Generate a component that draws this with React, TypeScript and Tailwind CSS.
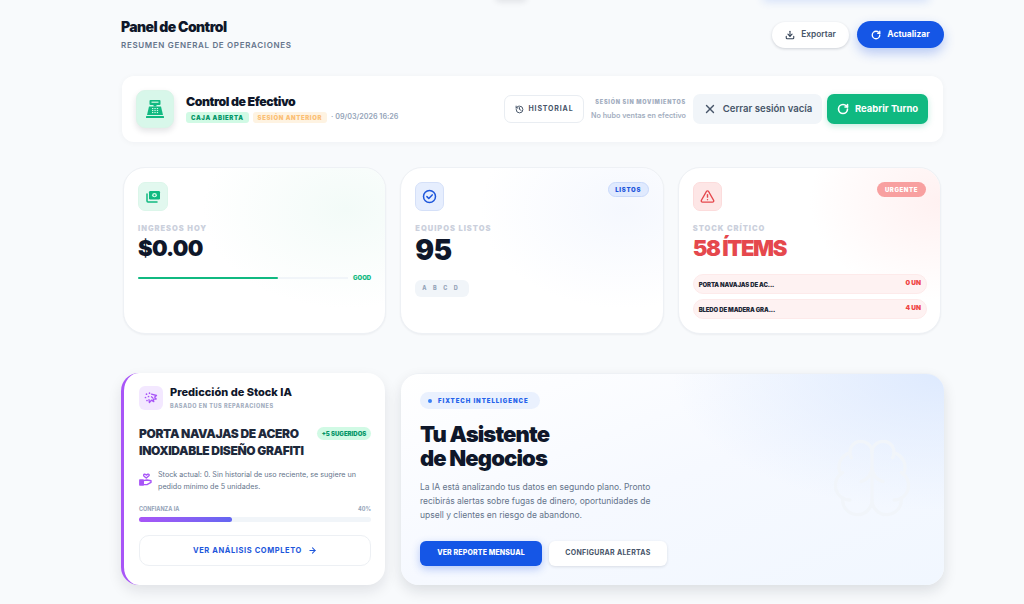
import React from "react";
import { Download, RotateCw, History, X, TriangleAlert, ArrowRight, Brain } from "lucide-react";

const font = { fontFamily: "Inter, 'Liberation Sans', sans-serif" };

function CashRegister() {
  return (
    <svg width="20" height="20" viewBox="0 0 20 20" fill="#10b981">
      <rect x="4.5" y="1" width="11" height="5" rx="1" />
      <rect x="6.5" y="2.6" width="7" height="1.2" fill="#d1fae5" />
      <rect x="8.5" y="6" width="3" height="1.5" />
      <path d="M4 7.5h12l2 8.5H2z" />
      <rect x="1" y="17" width="18" height="2" rx="0.6" />
      <g fill="#d1fae5">
        <rect x="7" y="9" width="1.3" height="1.1" /><rect x="9.4" y="9" width="1.3" height="1.1" /><rect x="11.8" y="9" width="1.3" height="1.1" />
        <rect x="7" y="11" width="1.3" height="1.1" /><rect x="9.4" y="11" width="1.3" height="1.1" /><rect x="11.8" y="11" width="1.3" height="1.1" />
        <rect x="7" y="13" width="1.3" height="1.1" /><rect x="9.4" y="13" width="1.3" height="1.1" /><rect x="11.8" y="13" width="1.3" height="1.1" />
      </g>
    </svg>
  );
}

function Money() {
  return (
    <svg width="15" height="13" viewBox="0 0 15 13" fill="none">
      <path d="M1 4v7a1 1 0 0 0 1 1h9" stroke="#10b981" strokeWidth="1.5" strokeLinecap="round" />
      <rect x="3" y="1" width="11" height="8.4" rx="1.2" fill="#10b981" />
      <ellipse cx="8.5" cy="5.2" rx="2.4" ry="2.1" fill="#d1fae5" />
      <circle cx="8.5" cy="5.2" r="1" fill="#10b981" />
    </svg>
  );
}

function CheckBadge() {
  return (
    <svg width="15" height="15" viewBox="0 0 15 15" fill="none" stroke="#1d56db" strokeWidth="1.5" strokeLinecap="round" strokeLinejoin="round">
      <circle cx="7.5" cy="7.5" r="6" />
      <path d="M4.9 7.6l1.9 1.9 3.4-3.6" />
    </svg>
  );
}

function Scatter() {
  return (
    <svg width="14" height="14" viewBox="0 0 14 14" fill="none" stroke="#a855f7" strokeWidth="1.3" strokeLinecap="round" strokeLinejoin="round">
      <path d="M2.5 3.2h.01M5.5 2.2h.01M1.5 6.5h.01M4.5 5.5h.01M3 9.5h.01" strokeWidth="1.7" />
      <path d="M7.5 3.2l5 1.3-1.8 1.6 1.5 1.9-3 .2.6 2.5-2.4-1.6-2 2.5-.4-3 " />
      <path d="M7.5 5.8l1.3 1.1" />
    </svg>
  );
}

function HandBox() {
  return (
    <svg width="13" height="14" viewBox="0 0 13 14" fill="none" stroke="#a855f7" strokeWidth="1.4" strokeLinejoin="round">
      <path d="M5 4.2 7.3 6l2.6-2.2c.8-.8 0-1.9-1-1.6L7.3 3 5.8 2.2c-1-.3-1.6.9-.8 2z" />
      <path d="M.8 8h3.4v5H.8z" fill="#a855f7" />
      <path d="M4.2 8.6 8 8l4 .8v1.6l-4 2.2H4.2z" />
    </svg>
  );
}

function StatCard({
  children,
  wash,
}: {
  children: React.ReactNode;
  wash: string;
}) {
  return (
    <div className="relative h-[167px] flex-1 overflow-hidden rounded-[22px] border border-[#eef1f5] bg-white px-[14px] py-[14px] shadow-[0_1px_2px_rgba(15,23,42,0.05)]">
      <div className={`absolute inset-0 ${wash}`} />
      <div className="relative">{children}</div>
    </div>
  );
}

function Critical({ name, qty }: { name: string; qty: string }) {
  return (
    <div className="flex h-[20px] items-center justify-between rounded-[10px] border border-[#fdeaea] bg-[#fef2f2] pl-[5px] pr-[5px]">
      <span className="text-[6px] font-black tracking-[-0.02em] text-[#1f2937]">{name}</span>
      <span className="text-[6.5px] font-black text-[#ef4444]">{qty}</span>
    </div>
  );
}

export default function App() {
  return (
    <div style={font} className="relative h-[604px] w-[1024px] overflow-hidden bg-[#f8fafc] pl-[121px] pr-[80px] pt-[20px] text-[#0f172a]">
      <div className="absolute left-[495px] top-[-10px] h-[10px] w-[32px] rounded-full shadow-[0_2px_6px_rgba(15,23,42,0.1)]" />
      <div className="absolute left-[762px] top-[-10px] h-[10px] w-[168px] rounded-full shadow-[0_2px_8px_rgba(37,99,235,0.16)]" />

      <header className="flex h-[36px] items-start justify-between">
        <div>
          <h1 className="text-[14px] font-black leading-[14px] tracking-[-0.04em] text-[#0f172a]">Panel de Control</h1>
          <p className="mt-[6px] text-[8px] font-semibold leading-[10px] tracking-[0.083em] text-[#64748b]">RESUMEN GENERAL DE OPERACIONES</p>
        </div>
        <div className="flex items-center gap-[8px] pt-px">
          <button className="flex h-[26px] w-[77px] items-center justify-center gap-[6px] rounded-full bg-white text-[8.3px] font-semibold text-[#475569] shadow-[0_1px_3px_rgba(15,23,42,0.18)]">
            <Download size={10} strokeWidth={2.6} className="text-[#334155]" />
            Exportar
          </button>
          <button className="flex h-[27px] w-[87px] items-center justify-center gap-[6px] rounded-full bg-[#1556e6] text-[8.5px] font-bold text-white shadow-[0_5px_12px_rgba(29,86,230,0.3)]">
            <RotateCw size={10} strokeWidth={3.2} />
            Actualizar
          </button>
        </div>
      </header>

      <section className="ml-px mt-[20px] flex h-[66px] w-[821px] items-center justify-between rounded-[12px] bg-white pl-[14px] pr-[15px] shadow-[0_1px_6px_rgba(15,23,42,0.04)]">
        <div className="flex items-center gap-[12px]">
          <div className="flex h-[38px] w-[38px] items-center justify-center rounded-[9px] border border-[#d9f5e8] bg-[#d8f7ea] shadow-[0_3px_6px_rgba(15,23,42,0.12)]">
            <CashRegister />
          </div>
          <div>
            <div className="text-[12.3px] font-black leading-[14px] tracking-[-0.035em] text-[#0f172a]">Control de Efectivo</div>
            <div className="mt-[2px] flex h-[12px] items-center gap-[4px]">
              <span className="flex h-[11px] items-center rounded-[3px] bg-[#d1fae5] px-[5px] text-[6px] font-black tracking-[0.105em] text-[#059669]">CAJA ABIERTA</span>
              <span className="flex h-[11px] items-center rounded-[3px] bg-[#fef3e2] px-[5px] text-[6px] font-black tracking-[0.1em] text-[#fbbf75]">SESIÓN ANTERIOR</span>
              <span className="text-[7.2px] font-semibold text-[#94a3b8]">· 09/03/2026 16:26</span>
            </div>
          </div>
        </div>
        <div className="flex items-center">
          <button className="flex h-[28px] w-[80px] items-center justify-center gap-[5px] rounded-[7px] border border-[#e9edf2] bg-white text-[7px] font-bold tracking-[0.12em] text-[#475569]">
            <History size={9} strokeWidth={2.6} />
            HISTORIAL
          </button>
          <div className="ml-[6px] mr-[7px] w-[96px] whitespace-nowrap text-right">
            <div className="text-[5.5px] font-black leading-[8px] tracking-[0.14em] text-[#a3aec0]">SESIÓN SIN MOVIMIENTOS</div>
            <div className="mt-[5px] text-[7.2px] font-semibold leading-[9px] text-[#a3aec0]">No hubo ventas en efectivo</div>
          </div>
          <button className="flex h-[30px] w-[129px] items-center justify-center gap-[6px] rounded-[7px] bg-[#f1f5f9] text-[9.6px] font-semibold text-[#475569]">
            <X size={14} strokeWidth={2.3} />
            Cerrar sesión vacía
          </button>
          <button className="ml-[5px] flex h-[30px] w-[101px] items-center justify-center gap-[6px] rounded-[7px] bg-[#10b981] text-[9.5px] font-bold text-white shadow-[0_2px_6px_rgba(16,185,129,0.25)]">
            <RotateCw size={12} strokeWidth={3.2} />
            Reabrir Turno
          </button>
        </div>
      </section>

      <section className="ml-[2px] mt-[25px] flex w-[818px] gap-[14px]">
        <StatCard wash="bg-[radial-gradient(ellipse_55%_60%_at_85%_25%,#f3fbf8,transparent)]">
          <div className="flex h-[29px] w-[30px] items-center justify-center rounded-[7px] border border-[#dcf6ea] bg-[#e2f8ef]"><Money /></div>
          <div className="mt-[13px] text-[7.5px] font-black leading-[10px] tracking-[0.13em] text-[#cbd0dc]">INGRESOS HOY</div>
          <div className="mt-[1px] text-[22px] font-black leading-[26px] tracking-[-0.035em] text-[#0f172a]">$0.00</div>
          <div className="mt-[12px] flex items-center gap-[5px]">
            <div className="h-[2px] w-[210px] bg-[#f1f5f9]"><div className="h-full w-[140px] rounded-full bg-[#10b981]" /></div>
            <span className="text-[6px] font-black text-[#10b981]">GOOD</span>
          </div>
        </StatCard>
        <StatCard wash="bg-[radial-gradient(ellipse_55%_60%_at_85%_25%,#f5f8fe,transparent)]">
          <div className="flex items-start justify-between">
            <div className="flex h-[29px] w-[29px] items-center justify-center rounded-[7px] border border-[#d5e0f8] bg-[#e6eefe]"><CheckBadge /></div>
            <span className="flex h-[15px] w-[41px] items-center justify-center rounded-full border border-[#c9d9fa] bg-[#e0eafe] text-[6px] font-black tracking-[0.12em] text-[#1d56db]">LISTOS</span>
          </div>
          <div className="mt-[13px] text-[7.5px] font-black leading-[10px] tracking-[0.13em] text-[#cbd0dc]">EQUIPOS LISTOS</div>
          <div className="mt-[1px] text-[28px] font-black leading-[30px] tracking-[-0.03em] text-[#0f172a]">95</div>
          <div className="mt-[15px] flex h-[17px] w-[54px] items-center gap-[6.5px] rounded-[6px] bg-[#f1f5f9] pl-[7px] text-[5.5px] font-extrabold text-[#94a3b8]">
            <span>A</span><span>B</span><span>C</span><span>D</span>
          </div>
        </StatCard>
        <StatCard wash="bg-[radial-gradient(ellipse_50%_60%_at_100%_20%,#fff1f1,transparent)]">
          <div className="flex items-start justify-between">
            <div className="flex h-[29px] w-[29px] items-center justify-center rounded-[7px] border border-[#fcdcdc] bg-[#fde6e6]"><TriangleAlert size={15} strokeWidth={2.3} className="text-[#e5484d]" /></div>
            <span className="flex h-[15px] w-[49px] items-center justify-center rounded-full bg-[#f8a0a0] text-[6px] font-black tracking-[0.1em] text-white">URGENTE</span>
          </div>
          <div className="mt-[13px] text-[7.5px] font-black leading-[10px] tracking-[0.13em] text-[#cbd0dc]">STOCK CRÍTICO</div>
          <div className="mt-[1px] text-[22px] font-black leading-[26px] tracking-[-0.065em] text-[#e5484d]">58 ÍTEMS</div>
          <div className="mt-[13px] -mr-px flex flex-col gap-[5px]">
            <Critical name="PORTA NAVAJAS DE AC..." qty="0 UN" />
            <Critical name="BLEDO DE MADERA GRA..." qty="4 UN" />
          </div>
        </StatCard>
      </section>

      <section className="mt-[39px] flex w-[823px] gap-[16px]">
        <div className="flex h-[212px] w-[264px] flex-col rounded-[18px] border-l-[3px] border-[#a855f7] bg-white py-[13px] pl-[15px] pr-[14px] shadow-[0_6px_14px_rgba(15,23,42,0.1)]">
          <div className="flex items-start gap-[7px]">
            <div className="flex h-[24px] w-[24px] items-center justify-center rounded-[6px] bg-[#f3e8ff]"><Scatter /></div>
            <div>
              <div className="text-[11px] font-extrabold leading-[13px] text-[#0f172a]">Predicción de Stock IA</div>
              <div className="mt-[3px] text-[5.5px] font-extrabold leading-[8px] tracking-[0.1em] text-[#a3aec0]">BASADO EN TUS REPARACIONES</div>
            </div>
          </div>
          <div className="relative mt-[15px]">
            <div className="text-[12px] font-black leading-[17px] tracking-[-0.03em] text-[#1e293b]">PORTA NAVAJAS DE ACERO<br />INOXIDABLE DISEÑO GRAFITI</div>
            <span className="absolute right-0 top-[2px] flex h-[13px] w-[54px] items-center justify-center rounded-full bg-[#d1fae5] text-[6px] font-black text-[#059669]">+5 SUGERIDOS</span>
          </div>
          <div className="mt-[10px] flex items-start gap-[6px]">
            <div className="pt-[3px]"><HandBox /></div>
            <p className="text-[7.2px] font-normal leading-[11.5px] text-[#64748b]">Stock actual: 0. Sin historial de uso reciente, se sugiere un pedido mínimo de 5 unidades.</p>
          </div>
          <div className="mt-[13px] flex justify-between text-[5.5px] font-bold leading-[8px] text-[#94a3b8]">
            <span>CONFIANZA IA</span><span>40%</span>
          </div>
          <div className="mt-[4px] h-[5px] w-full rounded-full bg-[#f1f5f9]">
            <div className="h-full w-[93px] rounded-full bg-gradient-to-r from-[#a855f7] to-[#6366f1]" />
          </div>
          <button className="mt-[13px] flex h-[31px] items-center justify-center gap-[6px] rounded-[10px] border border-[#edf0f4] bg-white text-[7.5px] font-bold tracking-[0.08em] text-[#1d56db]">
            VER ANÁLISIS COMPLETO
            <ArrowRight size={9} strokeWidth={2.8} />
          </button>
        </div>

        <div className="relative h-[212px] w-[543px] overflow-hidden rounded-[18px] border-t border-[#eef1f5] bg-gradient-to-br from-white via-[#f6f9ff] to-[#f1f7ff] pl-[19px] pt-[18px] shadow-[0_6px_14px_rgba(15,23,42,0.12)]">
          <div className="absolute inset-0 bg-[radial-gradient(ellipse_50%_65%_at_100%_0%,#deeafe,transparent)]" />
          <Brain size={88} strokeWidth={0.9} className="absolute right-[28px] top-[60px] text-[#f1f5fa]" />
          <div className="relative">
            <div className="flex h-[17px] w-[120px] items-center gap-[6px] rounded-full bg-[#eaf1fe] pl-[8px] text-[6px] font-black tracking-[0.16em] text-[#2563eb]">
              <span className="h-[4px] w-[4px] rounded-full bg-[#3b82f6]" />
              FIXTECH INTELLIGENCE
            </div>
            <h2 className="mt-[13px] text-[22px] font-black leading-[24px] tracking-[-0.04em] text-[#0f172a]">Tu Asistente<br />de Negocios</h2>
            <p className="mt-[10px] w-[240px] text-[8.5px] font-normal leading-[14px] text-[#64748b]">La IA está analizando tus datos en segundo plano. Pronto recibirás alertas sobre fugas de dinero, oportunidades de upsell y clientes en riesgo de abandono.</p>
            <div className="mt-[19px] flex items-center gap-[7px]">
              <button className="flex h-[25px] w-[122px] items-center justify-center rounded-[6px] bg-[#1556e6] text-[7px] font-extrabold tracking-[0.02em] text-white shadow-[0_3px_8px_rgba(29,86,230,0.3)]">VER REPORTE MENSUAL</button>
              <button className="flex h-[25px] w-[118px] items-center justify-center rounded-[6px] bg-white text-[7px] font-bold tracking-[0.04em] text-[#475569] shadow-[0_1px_3px_rgba(15,23,42,0.12)]">CONFIGURAR ALERTAS</button>
            </div>
          </div>
        </div>
      </section>
    </div>
  );
}
